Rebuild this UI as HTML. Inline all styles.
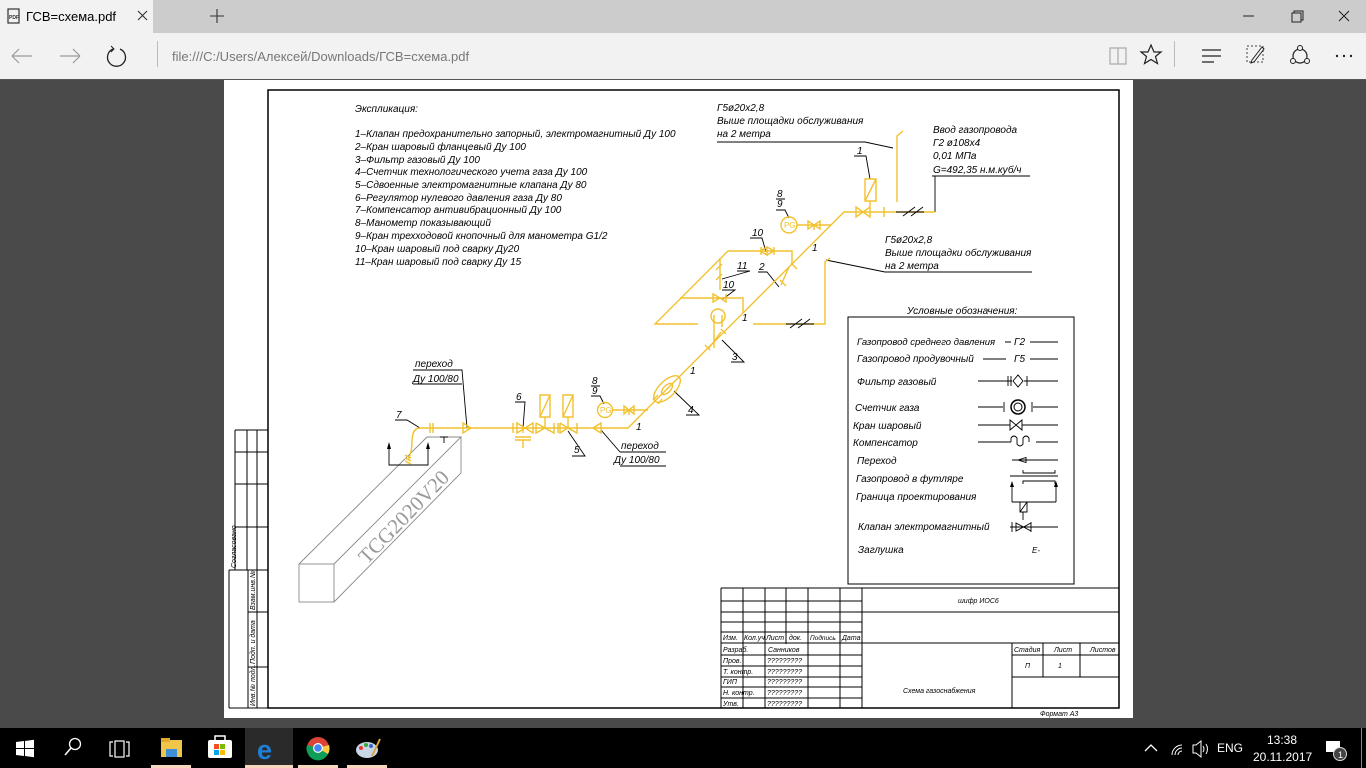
<!DOCTYPE html>
<html><head><meta charset="utf-8"><style>
html,body{margin:0;padding:0;width:1366px;height:768px;overflow:hidden;background:#4a4a4a}
svg{display:block}
.t{font-family:"Liberation Sans","DejaVu Sans",sans-serif;font-style:italic;font-size:10px;fill:#000}
.s{font-family:"Liberation Sans",sans-serif;font-style:italic;font-size:7px;fill:#000}
.ui{font-family:"Liberation Sans","DejaVu Sans",sans-serif;font-size:13px}
</style></head><body>
<svg width="1366" height="768" viewBox="0 0 1366 768" xmlns="http://www.w3.org/2000/svg">
<rect x="0" y="0" width="1366" height="33" fill="#cccccc"/>
<rect x="0" y="0" width="153" height="33" fill="#f2f2f2"/>
<rect x="0" y="33" width="1366" height="46" fill="#f2f2f2"/>
<rect x="0" y="79" width="1366" height="1" fill="#555"/>
<rect x="8" y="9" width="11" height="14" fill="none" stroke="#333" stroke-width="1.2"/>
<text x="9" y="19" font-size="5" font-family="Liberation Sans" font-weight="bold" fill="#333">PDF</text>
<text x="26" y="21" class="ui" fill="#000">ГСВ=схема.pdf</text>
<path d="M138 11l9 9M147 11l-9 9" stroke="#333" stroke-width="1.1"/>
<path d="M210 16h14M217 9v14" stroke="#333" stroke-width="1.1"/>
<path d="M1243 16h11" stroke="#222" stroke-width="1"/>
<rect x="1292" y="13" width="9" height="9" fill="none" stroke="#222"/><path d="M1294 13v-2h9v9h-2" fill="none" stroke="#222"/>
<path d="M1339 11l10 10M1349 11l-10 10" stroke="#222" stroke-width="1.1"/>
<path d="M12 56h20M12 56l7-7M12 56l7 7" stroke="#999" stroke-width="1.2" fill="none"/>
<path d="M60 56h20M80 56l-7-7M80 56l-7 7" stroke="#999" stroke-width="1.2" fill="none"/>
<path d="M113 49a9 9 0 1 0 7 0" stroke="#222" stroke-width="1.3" fill="none"/><path d="M111 46l3 3-3 3" stroke="#222" fill="none"/>
<rect x="157" y="41" width="1" height="26" fill="#bbb"/>
<text x="172" y="61" class="ui" fill="#777">file:///C:/Users/Алексей/Downloads/ГСВ=схема.pdf</text>
<path d="M1110 48h8v16h-8zM1118 48h8v16h-8z" stroke="#aaa" fill="none" stroke-width="1.2"/>
<path d="M1151 45l3 7 7 0-5.5 4.5 2 7-6.5-4-6.5 4 2-7-5.5-4.5 7 0z" fill="none" stroke="#222" stroke-width="1.2"/>
<rect x="1174" y="41" width="1" height="26" fill="#bbb"/>
<path d="M1202 50h19M1202 56h19M1202 62h12" stroke="#222" stroke-width="1.2"/>
<rect x="1247" y="46" width="16" height="16" fill="none" stroke="#444" stroke-dasharray="2 2"/><path d="M1252 60l10-13 2 2-10 13-3 1z" fill="none" stroke="#222"/>
<circle cx="1300" cy="56" r="7" fill="none" stroke="#222" stroke-width="1.2"/><circle cx="1300" cy="48" r="2.5" fill="#f2f2f2" stroke="#222"/><circle cx="1293" cy="61" r="2.5" fill="#f2f2f2" stroke="#222"/><circle cx="1307" cy="61" r="2.5" fill="#f2f2f2" stroke="#222"/>
<circle cx="1337" cy="56" r="1.2" fill="#222"/><circle cx="1344" cy="56" r="1.2" fill="#222"/><circle cx="1351" cy="56" r="1.2" fill="#222"/>

<rect x="224" y="80" width="909" height="638" fill="#fff"/>
<g fill="none" stroke="#000" stroke-width="1">
<rect x="268" y="90" width="851" height="618" stroke-width="1.5"/>
<path d="M235 430h33M235 430v140M247 430v140M257 430v140M235 452h33M235 484h33M235 527h33M235 570h33"/>
<path d="M229 570h39M229 570v138M248 570v138M257 570v138M248 612h20M248 667h20M229 708h39"/>
<path d="M721 588h398M721 588v120M862 588v120M743 588v120M765 588v120M786 588v56M808 588v120M840 588v120"/>
<path d="M721 601h141M721 612h398M721 622h141M721 632h141M721 643h398M721 655h141M721 666h141M721 677h141M721 687h141M721 698h141"/>
<path d="M1012 643v65M1043 643v34M1080 643v34M1012 655h107M1012 677h107"/>
<rect x="848" y="317" width="226" height="267"/>
</g>
<text x="236" y="568" class="s" transform="rotate(-90 236 568)">Согласовано</text>
<text x="255" y="610" class="s" transform="rotate(-90 255 610)">Взам.инв.№</text>
<text x="255" y="664" class="s" transform="rotate(-90 255 664)">Подп. и дата</text>
<text x="255" y="706" class="s" transform="rotate(-90 255 706)">Инв.№ подл.</text>
<g class="s">
<text x="723" y="640">Изм.</text><text x="744" y="640">Кол.уч</text><text x="766" y="640">Лист</text><text x="789" y="640">док.</text><text x="810" y="640" font-size="6.5">Подпись</text><text x="842" y="640">Дата</text>
<text x="723" y="652">Разраб.</text><text x="768" y="652">Санников</text>
<text x="723" y="663">Пров.</text><text x="767" y="663">?????????</text>
<text x="723" y="674">Т. контр.</text><text x="767" y="674">?????????</text>
<text x="723" y="684">ГИП</text><text x="767" y="684">?????????</text>
<text x="723" y="695">Н. контр.</text><text x="767" y="695">?????????</text>
<text x="723" y="706">Утв.</text><text x="767" y="706">?????????</text>
<text x="958" y="603">шифр ИОС6</text>
<text x="1014" y="652">Стадия</text><text x="1054" y="652">Лист</text><text x="1090" y="652">Листов</text>
<text x="1025" y="668">П</text><text x="1058" y="668">1</text>
<text x="903" y="693">Схема газоснабжения</text>
<text x="1040" y="716">Формат А3</text>
</g>

<g class="t">
<text x="355" y="112">Экспликация:</text>
<text x="355" y="137">1–Клапан предохранительно запорный, электромагнитный Ду 100</text>
<text x="355" y="150">2–Кран шаровый фланцевый Ду 100</text>
<text x="355" y="163">3–Фильтр газовый Ду 100</text>
<text x="355" y="175">4–Счетчик технологического учета газа Ду 100</text>
<text x="355" y="188">5–Сдвоенные электромагнитные клапана Ду 80</text>
<text x="355" y="201">6–Регулятор нулевого давления газа Ду 80</text>
<text x="355" y="213">7–Компенсатор антивибрационный Ду 100</text>
<text x="355" y="226">8–Манометр показывающий</text>
<text x="355" y="239">9–Кран трехходовой кнопочный для манометра G1/2</text>
<text x="355" y="252">10–Кран шаровый под сварку Ду20</text>
<text x="355" y="265">11–Кран шаровый под сварку Ду 15</text>
<text x="717" y="111">Г5ø20x2,8</text>
<text x="717" y="124">Выше площадки обслуживания</text>
<text x="717" y="137">на 2 метра</text>
<text x="933" y="133">Ввод газопровода</text>
<text x="933" y="146">Г2 ø108х4</text>
<text x="933" y="159">0,01 МПа</text>
<text x="933" y="173">G=492,35 н.м.куб/ч</text>
<text x="885" y="243">Г5ø20x2,8</text>
<text x="885" y="256">Выше площадки обслуживания</text>
<text x="885" y="269">на 2 метра</text>
<text x="415" y="367">переход</text>
<text x="413" y="382">Ду 100/80</text>
<text x="621" y="449">переход</text>
<text x="614" y="463">Ду 100/80</text>
<text x="857" y="154">1</text>
<text x="777" y="197">8</text><text x="777" y="207">9</text>
<text x="752" y="236">10</text>
<text x="737" y="269">11</text>
<text x="759" y="270">2</text>
<text x="723" y="288">10</text>
<text x="732" y="360">3</text>
<text x="688" y="413">4</text>
<text x="592" y="384">8</text><text x="592" y="394">9</text>
<text x="516" y="400">6</text>
<text x="574" y="453">5</text>
<text x="396" y="418">7</text>
<text x="812" y="251">1</text><text x="742" y="321">1</text><text x="690" y="374">1</text><text x="636" y="430">1</text>
<text x="907" y="314">Условные обозначения:</text>
<text x="857" y="345" font-size="9.5">Газопровод среднего давления</text>
<text x="857" y="362">Газопровод продувочный</text>
<text x="857" y="385">Фильтр газовый</text>
<text x="855" y="411">Счетчик газа</text>
<text x="853" y="429">Кран шаровый</text>
<text x="853" y="446">Компенсатор</text>
<text x="857" y="464">Переход</text>
<text x="856" y="482">Газопровод в футляре</text>
<text x="856" y="500">Граница проектирования</text>
<text x="858" y="530">Клапан электромагнитный</text>
<text x="858" y="553">Заглушка</text>
<text x="1014" y="345">Г2</text><text x="1014" y="362">Г5</text>
<text x="1032" y="553" font-size="8">E-</text>
</g>

<g fill="none" stroke="#000" stroke-width="0.9">
<path d="M717 142h148l28 6"/>
<path d="M932 176h98M935 176v36"/>
<path d="M885 272h147M885 272l-59-12"/>
<path d="M854 156h12l4 23"/>
<path d="M776 199h9M776 210h9l4 8"/>
<path d="M750 238h12l4 14"/>
<path d="M737 271h13l-28 8"/>
<path d="M758 272h9l12 15"/>
<path d="M722 290h13l-12 9"/>
<path d="M731 362h13l-22 -22"/>
<path d="M686 415h13l-25 -24"/>
<path d="M591 386h9M591 396h9l4 8"/>
<path d="M515 402h10l-2 26"/>
<path d="M572 456h13l-17 -25"/>
<path d="M395 420h12l13 8"/>
<path d="M413 370h49l5 58M413 384h49"/>
<path d="M620 452h46M620 466h46M620 452l-19 -22"/>
<path d="M1005 342h6M1030 342h28M983 359h23M1030 359h28"/>
<path d="M978 381h34M1024 381h34M1008 376v10M1011 376v10M1027 376v10M1013 381l5-6 5 6-5 6z"/>
<path d="M978 407h25M1033 407h25M1004 402v10M1032 402v10"/>
<path d="M978 425h32M1022 425h36M1010 420v10l12-10v10z"/>
<path d="M978 442h33M1036 442h22M1011 442v-4q3-4 6 0v6q3 4 6 0v-6q3-4 6 0v4"/>
<path d="M1012 460h46M1018 460l8-2.5v5z"/>
<path d="M1010 476h48M1023 470v3h32v-3M1023 484v-3h32v3"/>
<path d="M1012 502v-15M1056 502v-15M1012 502h44"/>
<path d="M1010 527h48M1012 522v10M1031 522v10M1016 523l15 8v-8l-15 8zM1020 512h7v-10h-7zM1020 512l7-10M1023 512v8"/>
</g>
<path d="M1010 487l2-6 2 6zM1054 487l2-6 2 6z" fill="#000"/>
<circle cx="1018" cy="407" r="7" fill="none" stroke="#000" stroke-width="1.5"/><circle cx="1018" cy="407" r="4" fill="none" stroke="#000"/>
<g fill="none" stroke="#8a8a8a" stroke-width="0.9">
<rect x="299" y="564" width="35" height="38"/>
<path d="M299 564L427 437h34L334 564M461 437v36L334 602"/>
</g>
<text x="0" y="0" font-family="Liberation Serif,serif" font-size="21" fill="#9a9a9a" transform="translate(367 565) rotate(-46)">TCG2020V20</text>

<g fill="none" stroke="#000" stroke-width="0.9">
<path d="M389 446v19h39v-19M440 437h8M444 437v6"/>
</g>
<path d="M387 449l2-7 2 7zM426 449l2-7 2 7z" fill="#000"/>

<g fill="none" stroke="#f2c12e" stroke-width="1.4">
<path d="M420 428h208L844 212h91"/>
<path d="M420 428q-8 0-8 14 0 10-4 18"/>
<path d="M405 455l6 3M405 458l6 3M405 461l6 3"/>
<path d="M430 423v10M433 423v10"/>
<path d="M463 423v10l8-5z"/>
<path d="M513 423v10M517 423l8 5-8 5zM533 423l-8 5 8 5zM523 428v5M515 437h16M515 440h16M523 440v8"/>
<path d="M536 423v10l9-5-9-5M554 423v10l-9-5M545 428v-11M540 395h10v22h-10zM540 417l10-22"/>
<path d="M558 423v10M560 423v10l8-5-8-5M577 423v10l-9-5M568 428v-11M563 395h10v22h-10zM563 417l10-22"/>
<path d="M601 423l-8 5 8 5z"/>
<circle cx="605" cy="410" r="7.5"/>
<path d="M613 410h35M624 406v8l10-8v8zM629 410v5"/>
<path d="M653 400l5-5M658 404l4-5"/>
<ellipse cx="667" cy="389" rx="17" ry="8" transform="rotate(-45 667 389)"/>
<ellipse cx="667" cy="389" rx="7" ry="3.5" transform="rotate(-45 667 389)"/>
<path d="M705 345l5 5M721 329l5 5M709 348l12-16M714 315v33M722 315v12"/>
<circle cx="718" cy="316" r="7"/>
<path d="M780 280l6 6M791 263l6 6M781 285l8-18"/>
<circle cx="789" cy="225" r="8"/>
<path d="M797 225h34M808 221v8l12-8v8zM814 225v5"/>
<path d="M856 207v10l14-10v10zM870 212v-11M865 179h11v22h-11zM865 201l11-22M856 207v10M884 207v10"/>
<path d="M897 202v-66l6-5"/>
<path d="M792 263v-12h-64L655 324h43M753 324h72v-62l5-4"/>
<path d="M767 247v8l-7-4 7-4zM767 247l7 4-7 4M761 247v8M774 247v8"/>
<path d="M680 298h63v15M713 294v8l7-4zM726 294v8l-6-4"/>
<path d="M720 258v32M716 270l6-6M716 280l6-6"/>
</g>
<g font-family="Liberation Sans" font-size="8" fill="#f2c12e"><text x="600" y="413">PG</text><text x="784" y="228">PG</text></g>
<g stroke="#000" stroke-width="0.9" fill="none">
<path d="M903 216l12-9M911 216l12-9M896 212h28"/>
<path d="M790 328l12-9M798 328l12-9M786 324h28"/>
</g>

<rect x="0" y="728" width="1366" height="40" fill="#000"/>
<rect x="245" y="728" width="48" height="40" fill="#2a2a2a"/>
<g fill="#fff">
<path d="M16 742l8-1v7h-8zM25 741l9-1.3v8.3h-9zM16 749h8v7l-8-1zM25 749h9v8.3l-9-1.3z"/>
</g>
<circle cx="75" cy="744" r="5.5" fill="none" stroke="#fff" stroke-width="1.3"/><path d="M71 748l-6 7" stroke="#fff" stroke-width="1.5"/>
<path d="M113 742h-3v14h3M126 742h3v14h-3" stroke="#fff" fill="none" stroke-width="1.2"/><rect x="115" y="741" width="9" height="16" fill="none" stroke="#fff" stroke-width="1.2"/>
<rect x="161" y="740" width="21" height="17" fill="#f0c64a"/><rect x="161" y="738" width="9" height="4" fill="#e0a930"/><rect x="166" y="749" width="11" height="8" fill="#3d8fd8"/>
<rect x="208" y="740" width="24" height="18" rx="2" fill="#fff"/><path d="M215 740v-4h10v4" stroke="#fff" fill="none" stroke-width="1.5"/>
<rect x="214" y="744" width="5" height="5" fill="#f25022"/><rect x="220" y="744" width="5" height="5" fill="#7fba00"/><rect x="214" y="750" width="5" height="5" fill="#00a4ef"/><rect x="220" y="750" width="5" height="5" fill="#ffb900"/>
<text x="257" y="759" font-family="Liberation Sans" font-weight="bold" font-size="27" fill="#1e7fd8">e</text>
<circle cx="318" cy="748" r="11" fill="#db4437"/><path d="M318 748L328 754A11 11 0 0 1 308 754z" fill="#0f9d58"/><path d="M318 748L329 745A11 11 0 0 1 328 754z" fill="#ffcd40"/><path d="M318 748L308 754A11 11 0 0 1 307 745z" fill="#0f9d58"/><circle cx="318" cy="748" r="5" fill="#fff"/><circle cx="318" cy="748" r="3.8" fill="#4285f4"/>
<ellipse cx="367" cy="750" rx="11" ry="8" fill="#c9d6e6"/><circle cx="361" cy="748" r="2" fill="#e33"/><circle cx="366" cy="745" r="2" fill="#3a3"/><circle cx="371" cy="746" r="2" fill="#36c"/><path d="M372 756l8-17" stroke="#d9a540" stroke-width="2"/>
<rect x="151" y="765" width="40" height="3" fill="#f6d7bd"/><rect x="245" y="765" width="48" height="3" fill="#f6d7bd"/><rect x="298" y="765" width="40" height="3" fill="#f6d7bd"/><rect x="347" y="765" width="40" height="3" fill="#f6d7bd"/>
<path d="M1145 751l6-6 6 6" stroke="#fff" fill="none" stroke-width="1.3"/>
<path d="M1172 755a10 10 0 0 1 10-10M1175 755a7 7 0 0 1 7-7M1178 755a4 4 0 0 1 4-4" stroke="#fff" fill="none"/>
<path d="M1193 745h3l5-4v16l-5-4h-3z" stroke="#fff" fill="none"/><path d="M1203 746q2 3 0 6M1206 744q3 5 0 10" stroke="#fff" fill="none"/>
<text x="1217" y="752" font-family="Liberation Sans" font-size="12" fill="#fff">ENG</text>
<text x="1267" y="744" font-family="Liberation Sans" font-size="12" fill="#fff">13:38</text>
<text x="1253" y="761" font-family="Liberation Sans" font-size="12" fill="#fff">20.11.2017</text>
<rect x="1326" y="741" width="14" height="11" fill="#fff"/>
<circle cx="1340" cy="754" r="6.5" fill="#444" stroke="#ddd"/><text x="1338" y="758" font-family="Liberation Sans" font-size="9" fill="#fff">1</text>
<rect x="1361" y="728" width="1" height="40" fill="#888"/>
</svg>
</body></html>
